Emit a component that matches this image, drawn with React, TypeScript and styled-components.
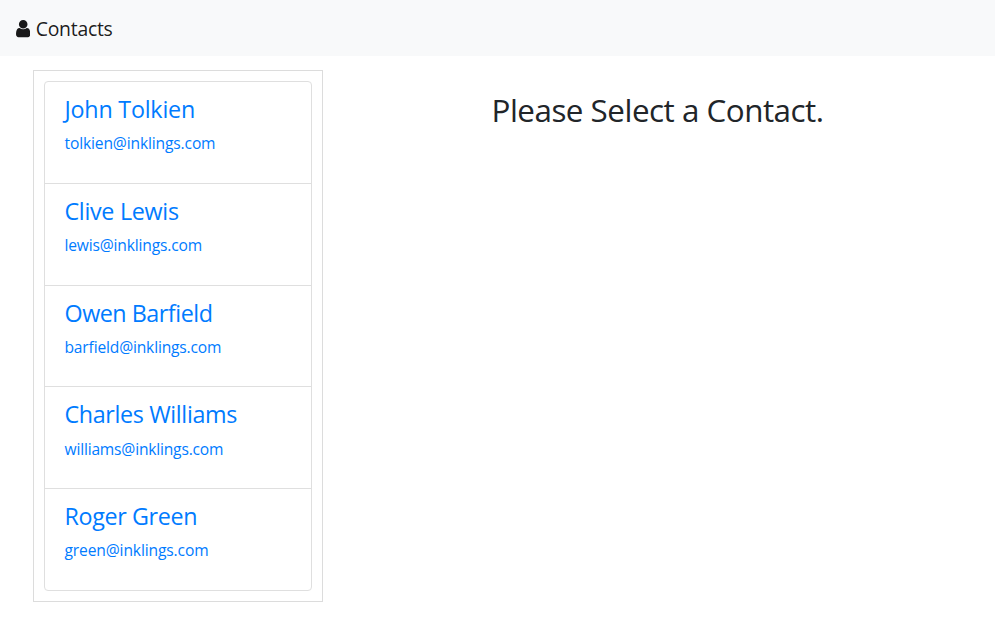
import React from "react";
import styled, { createGlobalStyle } from "styled-components";

const GlobalStyle = createGlobalStyle`
  *, *::before, *::after { box-sizing: border-box; }
  body {
    margin: 0;
    background: #fff;
    color: #212529;
    font-family: "Open Sans", "Noto Sans", sans-serif;
    font-size: 16px;
    line-height: 1.5;
  }
`;

const Navbar = styled.nav`
  display: flex;
  align-items: center;
  height: 56px;
  padding: 2px 16px 0;
  background: #f8f9fa;
`;

const Brand = styled.a`
  display: flex;
  align-items: center;
  gap: 5.4px;
  color: rgba(0, 0, 0, 0.9);
  font-size: 19.4px;
  letter-spacing: -0.27px;
  text-decoration: none;
`;

const UserGlyph = styled.svg`
  width: 14.4px;
  height: 17.2px;
  fill: currentColor;
`;

const Main = styled.main`
  display: flex;
  padding: 14px 0 0 33px;
`;

const Sidebar = styled.aside`
  width: 290px;
  padding: 10px;
  border: 1px solid #dcdcdc;
`;

const List = styled.ul`
  margin: 0;
  padding: 0;
  list-style: none;
  border: 1px solid #dfdfdf;
  border-radius: 4px;
`;

const Item = styled.li`
  height: 101.7px;
  padding: 13px 20px 0 19.5px;
  color: #007bff;
  &:first-child { height: 101px; }
  & + & { border-top: 1px solid #dfdfdf; }
`;

const Name = styled.h4<{ $tracking: number }>`
  margin: 0 0 7.6px;
  font-size: 23.3px;
  font-weight: 400;
  line-height: 28.8px;
  letter-spacing: ${(p) => p.$tracking}px;
`;

const Email = styled.p<{ $tracking: number }>`
  margin: 0;
  font-size: 15.6px;
  line-height: 24px;
  letter-spacing: ${(p) => p.$tracking}px;
`;

const Detail = styled.section`
  flex: 1;
  padding: 21px 3px 0 0;
  text-align: center;
`;

const Prompt = styled.h2`
  margin: 0;
  font-size: 31.4px;
  font-weight: 400;
  line-height: 38.4px;
  letter-spacing: -0.5px;
`;

const contacts = [
  { name: "John Tolkien", email: "tolkien@inklings.com", nameTracking: -0.22, emailTracking: -0.14 },
  { name: "Clive Lewis", email: "lewis@inklings.com", nameTracking: -0.3, emailTracking: -0.17 },
  { name: "Owen Barfield", email: "barfield@inklings.com", nameTracking: -0.47, emailTracking: -0.17 },
  { name: "Charles Williams", email: "williams@inklings.com", nameTracking: -0.36, emailTracking: -0.19 },
  { name: "Roger Green", email: "green@inklings.com", nameTracking: -0.36, emailTracking: -0.13 },
];

export default function App() {
  return (
    <>
      <GlobalStyle />
      <Navbar>
        <Brand href="#">
          <UserGlyph viewBox="0 128 1280 1536" aria-hidden="true">
            <path d="M1280 1399q0 109-62.5 187t-150.5 78h-854q-88 0-150.5-78t-62.5-187q0-85 8.5-160.5t31.5-152 58.5-131 94-89 134.5-34.5q131 128 313 128t313-128q76 0 134.5 34.5t94 89 58.5 131 31.5 152 8.5 160.5zm-256-887q0 159-112.5 271.5t-271.5 112.5-271.5-112.5-112.5-271.5 112.5-271.5 271.5-112.5 271.5 112.5 112.5 271.5z" />
          </UserGlyph>
          Contacts
        </Brand>
      </Navbar>
      <Main>
        <Sidebar>
          <List>
            {contacts.map((c) => (
              <Item key={c.email}>
                <Name $tracking={c.nameTracking}>{c.name}</Name>
                <Email $tracking={c.emailTracking}>{c.email}</Email>
              </Item>
            ))}
          </List>
        </Sidebar>
        <Detail><Prompt>Please Select a Contact.</Prompt></Detail>
      </Main>
    </>
  );
}
